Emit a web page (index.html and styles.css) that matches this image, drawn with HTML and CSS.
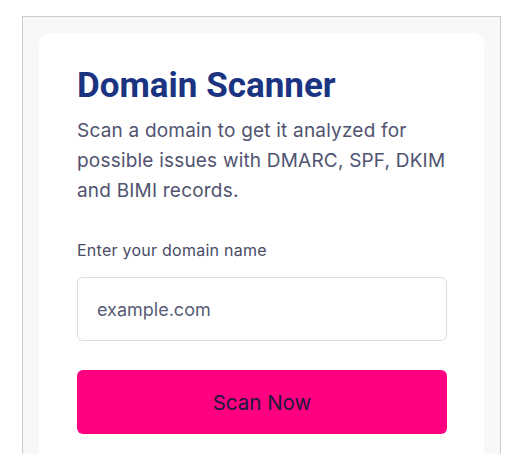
FILE: index.html
```html
<!DOCTYPE html>
<html lang="en">
<head>
<meta charset="utf-8">
<title>Domain Scanner</title>
<link rel="stylesheet" href="styles.css">
</head>
<body>
<div class="frame">
  <div class="card">
    <h1 class="title">Domain Scanner</h1>
    <p class="lead">Scan a domain to get it analyzed for possible issues with DMARC, SPF, DKIM and BIMI records.</p>
    <form class="form">
      <label class="label" for="domain">Enter your domain name</label>
      <input class="input" id="domain" type="text" placeholder="example.com">
      <button class="button" type="button">Scan Now</button>
    </form>
  </div>
</div>
</body>
</html>
```

FILE: styles.css
```css
html, body {
  margin: 0;
  padding: 0;
  background: #ffffff;
  height: 100%;
  overflow: hidden;
}
body {
  font-family: Inter, "Liberation Sans", sans-serif;
  padding: 16px 23px 0 22px;
  box-sizing: border-box;
}
.frame {
  background: #f8f8f8;
  border: 1px solid #cccccc;
  border-bottom: none;
  padding: 16px 16px 0 16px;
  height: calc(100% + 40px);
  box-sizing: border-box;
}
.card {
  background: #ffffff;
  border-radius: 12px;
  padding: 32px 37px 40px 38px;
  height: 100%;
  box-sizing: border-box;
}
.title {
  margin: 0;
  font-family: Roboto, "Liberation Sans", sans-serif;
  font-size: 35px;
  line-height: 42px;
  font-weight: 700;
  color: #1b3481;
}
.lead {
  margin: 9px 0 0 0;
  font-size: 19px;
  letter-spacing: 0.2px;
  line-height: 30px;
  color: #4f5370;
}
.form {
  display: flex;
  flex-direction: column;
  margin-top: 32px;
}
.label {
  font-size: 16px;
  letter-spacing: 0.25px;
  line-height: 24px;
  color: #484c66;
}
.input {
  margin-top: 15px;
  height: 64px;
  box-sizing: border-box;
  border: 1px solid #dcdae8;
  border-radius: 6px;
  padding: 0 19px;
  font-family: inherit;
  font-size: 18px;
  color: #4f5370;
  background: #ffffff;
  outline: none;
}
.input::placeholder {
  color: #585c75;
}
.button {
  margin-top: 29px;
  height: 64px;
  border: none;
  border-radius: 6px;
  background: #ff0080;
  color: #1a1a3a;
  font-family: inherit;
  font-size: 20.5px;
  cursor: pointer;
}
```
